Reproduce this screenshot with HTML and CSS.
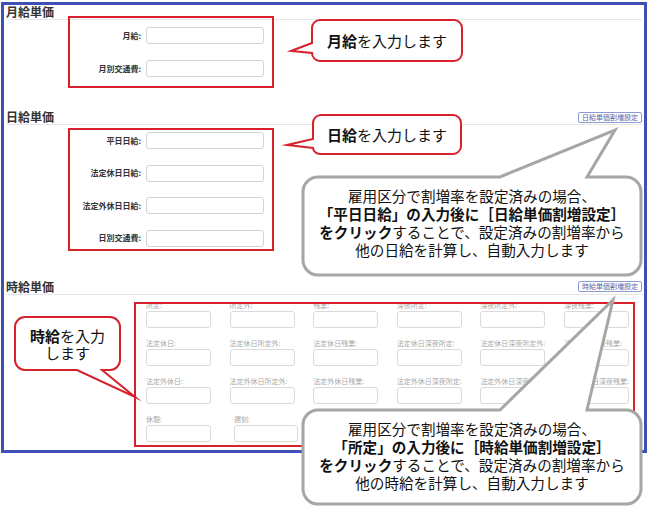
FILE: index.html
```html
<!DOCTYPE html>
<html lang="ja">
<head>
<meta charset="utf-8">
<title>単価設定</title>
<link rel="stylesheet" href="styles.css">
</head>
<body>
<div class="stage">
  <div class="frame">
    <section class="sec">
      <div class="sec-head"><h2 class="sec-title">月給単価</h2></div>
      <div class="form form-monthly">
        <label class="lbl">月給:</label><input class="inp" type="text">
        <label class="lbl">月別交通費:</label><input class="inp" type="text">
      </div>
    </section>
    <section class="sec">
      <div class="sec-head"><h2 class="sec-title">日給単価</h2><button class="btn" type="button">日給単価割増設定</button></div>
      <div class="form form-daily">
        <label class="lbl">平日日給:</label><input class="inp" type="text">
        <label class="lbl">法定休日日給:</label><input class="inp" type="text">
        <label class="lbl">法定外休日日給:</label><input class="inp" type="text">
        <label class="lbl">日別交通費:</label><input class="inp" type="text">
      </div>
    </section>
    <section class="sec">
      <div class="sec-head"><h2 class="sec-title">時給単価</h2><button class="btn" type="button">時給単価割増設定</button></div>
      <div class="hgrid hgrid-main">
        <div class="cell"><span class="cell-lbl">所定:</span><input class="inp" type="text"></div>
        <div class="cell"><span class="cell-lbl">所定外:</span><input class="inp" type="text"></div>
        <div class="cell"><span class="cell-lbl">残業:</span><input class="inp" type="text"></div>
        <div class="cell"><span class="cell-lbl">深夜所定:</span><input class="inp" type="text"></div>
        <div class="cell"><span class="cell-lbl">深夜所定外:</span><input class="inp" type="text"></div>
        <div class="cell"><span class="cell-lbl">深夜残業:</span><input class="inp" type="text"></div>
        <div class="cell"><span class="cell-lbl">法定休日:</span><input class="inp" type="text"></div>
        <div class="cell"><span class="cell-lbl">法定休日所定外:</span><input class="inp" type="text"></div>
        <div class="cell"><span class="cell-lbl">法定休日残業:</span><input class="inp" type="text"></div>
        <div class="cell"><span class="cell-lbl">法定休日深夜所定:</span><input class="inp" type="text"></div>
        <div class="cell"><span class="cell-lbl">法定休日深夜所定外:</span><input class="inp" type="text"></div>
        <div class="cell"><span class="cell-lbl">法定休日深夜残業:</span><input class="inp" type="text"></div>
        <div class="cell"><span class="cell-lbl">法定外休日:</span><input class="inp" type="text"></div>
        <div class="cell"><span class="cell-lbl">法定外休日所定外:</span><input class="inp" type="text"></div>
        <div class="cell"><span class="cell-lbl">法定外休日残業:</span><input class="inp" type="text"></div>
        <div class="cell"><span class="cell-lbl">法定外休日深夜所定:</span><input class="inp" type="text"></div>
        <div class="cell"><span class="cell-lbl">法定外休日深夜所定外:</span><input class="inp" type="text"></div>
        <div class="cell"><span class="cell-lbl">法定外休日深夜残業:</span><input class="inp" type="text"></div>
      </div>
      <div class="hgrid hgrid-last">
        <div class="cell"><span class="cell-lbl">休憩:</span><input class="inp" type="text"></div>
        <div class="cell"><span class="cell-lbl">遅刻:</span><input class="inp" type="text"></div>
        <div class="cell"><span class="cell-lbl">早退:</span><input class="inp" type="text"></div>
      </div>
    </section>
  </div>

  <div class="red-box rb1"></div>
  <div class="red-box rb2"></div>
  <div class="red-box rb3"></div>

  <div class="callout callout-red co-month">
    <svg class="callout-shape" width="150" height="41"><path d="M8,0 H142 A8,8 0 0 1 150,8 V33 A8,8 0 0 1 142,41 H8 A8,8 0 0 1 0,33 L-21,31 L0,23 V8 A8,8 0 0 1 8,0 Z"/></svg>
    <div class="callout-text"><b>月給</b>を入力します</div>
  </div>

  <div class="callout callout-red co-day">
    <svg class="callout-shape" width="148" height="39"><path d="M8,0 H140 A8,8 0 0 1 148,8 V31 A8,8 0 0 1 140,39 H7 A7,7 0 0 1 0,33 L-26,30 L0,24 V8 A8,8 0 0 1 8,0 Z"/></svg>
    <div class="callout-text"><b>日給</b>を入力します</div>
  </div>

  <div class="callout callout-red co-hour">
    <svg class="callout-shape" width="105" height="53"><path d="M10,0 H95 A10,10 0 0 1 105,10 V43 A10,10 0 0 1 95,53 H87 L120,80 L62,53 H10 A10,10 0 0 1 0,43 V10 A10,10 0 0 1 10,0 Z"/></svg>
    <div class="callout-text"><b>時給</b>を入力<br>します</div>
  </div>

  <div class="callout callout-gray co-note1">
    <svg class="callout-shape" width="338" height="98"><path d="M15,0 H197 L312,-47 L284,0 H323 A15,15 0 0 1 338,15 V83 A15,15 0 0 1 323,98 H15 A15,15 0 0 1 0,83 V15 A15,15 0 0 1 15,0 Z"/></svg>
    <div class="callout-text">雇用区分で割増率を設定済みの場合、<br><b>「平日日給」の入力後に［日給単価割増設定］</b><br><b>をクリック</b>することで、設定済みの割増率から<br>他の日給を計算し、自動入力します</div>
  </div>

  <div class="callout callout-gray co-note2">
    <svg class="callout-shape" width="338" height="94"><path d="M15,0 H197 L310,-110 L284,0 H323 A15,15 0 0 1 338,15 V79 A15,15 0 0 1 323,94 H15 A15,15 0 0 1 0,79 V15 A15,15 0 0 1 15,0 Z"/></svg>
    <div class="callout-text">雇用区分で割増率を設定済みの場合、<br><b>「所定」の入力後に［時給単価割増設定］</b><br><b>をクリック</b>することで、設定済みの割増率から<br>他の時給を計算し、自動入力します</div>
  </div>
</div>
</body>
</html>
```

FILE: styles.css
```css
* { box-sizing: border-box; }

html, body {
  margin: 0;
  padding: 0;
  background: #fff;
}

body {
  font-family: "Noto Sans CJK JP", "Noto Sans", sans-serif;
  color: #333;
  width: 649px;
  height: 506px;
  overflow: hidden;
}

.stage {
  position: relative;
  width: 649px;
  height: 506px;
}

.frame {
  margin: 2px 0 0 1px;
  width: 646px;
  border: 3px solid #3e50b4;
  padding: 0 2px 8px 2px;
  background: #fff;
}

.sec-head {
  display: flex;
  justify-content: space-between;
  align-items: center;
  height: 15px;
  border-bottom: 1px solid #e6e6e6;
}

.sec-title {
  margin: 0;
  font-size: 12px;
  line-height: 14px;
  font-weight: 700;
  color: #333;
}

.btn {
  font-family: inherit;
  font-size: 7px;
  line-height: 9px;
  padding: 0 3px;
  margin: 0;
  border: 1px solid #8d9bd3;
  border-radius: 2px;
  background: #fff;
  color: #5b68a6;
}

.form {
  display: grid;
  grid-template-columns: 135px 118px;
  column-gap: 5px;
  padding-top: 7px;
  align-items: center;
}

.form-monthly {
  row-gap: 16px;
  margin-bottom: 33px;
}

.form-daily {
  row-gap: 15.67px;
  margin-bottom: 33px;
}

.lbl {
  text-align: right;
  font-size: 8px;
  line-height: 10px;
  font-weight: 700;
  color: #333;
  white-space: nowrap;
}

.inp {
  display: block;
  width: 118px;
  height: 17px;
  margin: 0;
  padding: 0;
  border: 1px solid #d3d3d3;
  border-radius: 3px;
  background: #fff;
}

.hgrid {
  display: grid;
  grid-template-columns: repeat(6, 65px);
  column-gap: 18.6px;
  margin-left: 140px;
}

.hgrid-main {
  padding-top: 5px;
  row-gap: 10px;
}

.hgrid-last {
  margin-top: 10px;
  grid-template-columns: 65px 64px 64px;
  column-gap: 23px;
}

.cell-lbl {
  display: block;
  font-size: 7px;
  line-height: 10px;
  color: #a8a8a8;
  white-space: nowrap;
}

.cell .inp {
  width: 100%;
  margin-top: 1px;
  border-color: #dadada;
}

/* annotations */
.red-box {
  position: absolute;
  border: 2px solid #d7212b;
}

.rb1 { left: 68px; top: 14px; width: 206px; height: 72px; }
.rb2 { left: 68px; top: 126px; width: 206px; height: 123px; }
.rb3 { left: 134px; top: 300px; width: 501px; height: 145px; }

.callout {
  position: absolute;
  display: flex;
  align-items: center;
  justify-content: center;
  text-align: center;
}

.callout-shape {
  position: absolute;
  left: 0;
  top: 0;
  overflow: visible;
}

.callout-text {
  position: relative;
  color: #111;
  white-space: nowrap;
}

.callout-red path {
  fill: #fff;
  stroke: #d7212b;
  stroke-width: 2;
  stroke-miterlimit: 10;
}

.callout-gray path {
  fill: #fff;
  stroke: #a6a6a6;
  stroke-width: 3;
  stroke-miterlimit: 10;
}

.callout-red .callout-text {
  font-size: 15px;
  line-height: 17px;
}

.callout-gray .callout-text {
  font-size: 14.6px;
  line-height: 18px;
}

.co-month { left: 312px; top: 18px; width: 150px; height: 41px; }
.co-day { left: 313px; top: 113px; width: 148px; height: 39px; }
.co-hour { left: 15px; top: 315px; width: 105px; height: 53px; }
.co-note1 { left: 303px; top: 175px; width: 338px; height: 98px; padding-bottom: 6px; }
.co-note2 { left: 303px; top: 408px; width: 338px; height: 94px; padding-bottom: 3px; }
```
